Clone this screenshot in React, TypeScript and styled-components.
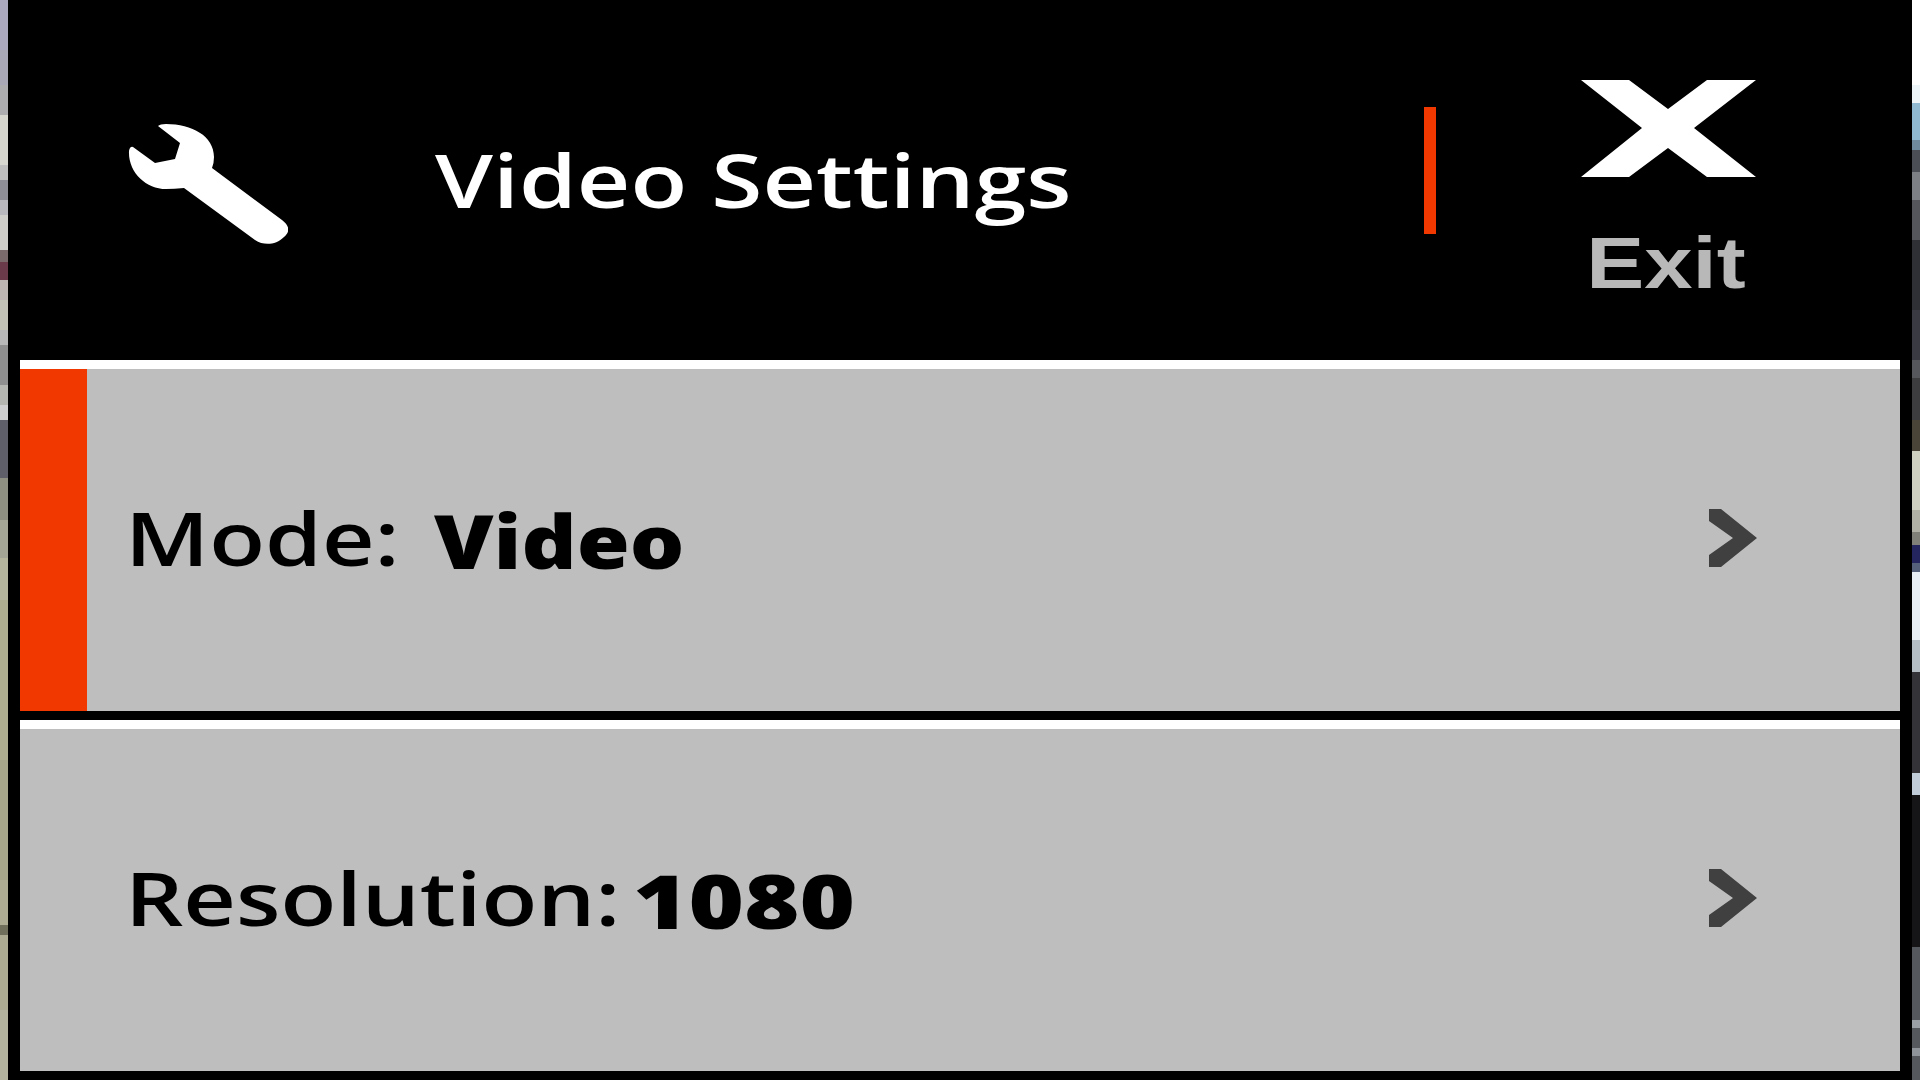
import React from "react";
import styled, { createGlobalStyle } from "styled-components";

const Global = createGlobalStyle`
  html, body { margin: 0; padding: 0; background: #000; overflow: hidden; }
`;

const Screen = styled.div`
  width: 1920px;
  height: 1080px;
  display: grid;
  grid-template-columns: 8px 1fr 8px;
  overflow: hidden;
`;

const Strip = styled.svg`
  display: block;
  width: 8px;
  height: 1080px;
`;

const Panel = styled.main`
  background: #000;
  padding: 0 12px 10px;
  display: flex;
  flex-direction: column;
  gap: 9px;
  font-family: "Open Sans", "Noto Sans", sans-serif;
`;

const Header = styled.header`
  height: 360px;
  margin-bottom: -9px;
  display: grid;
  grid-template-columns: 108px 160px 1136px 12px 145px 175px 1fr;
  color: #fff;
`;

const Wrench = styled.svg`
  grid-column: 2;
  display: block;
  width: 160px;
  height: 120px;
  margin-top: 124px;
`;

const Title = styled.h1`
  grid-column: 3;
  margin: 0;
  padding: 134px 0 0 147px;
  font-size: 74px;
  line-height: 92px;
  font-weight: 600;
  white-space: nowrap;
  filter: blur(0.5px);
  transform: scaleX(1.257);
  transform-origin: 147px 0;
`;

const Divider = styled.div`
  grid-column: 4;
  width: 12px;
  height: 127px;
  margin-top: 107px;
  background: #f03800;
`;

const ExitBox = styled.div`
  grid-column: 6;
  display: flex;
  flex-direction: column;
  align-items: center;
  padding-top: 80px;
`;

const ExitIcon = styled.svg`
  display: block;
  width: 175px;
  height: 97px;
`;

const ExitLabel = styled.span`
  font-family: "Liberation Sans", Arial, sans-serif;
  font-size: 73px;
  line-height: 84px;
  margin: 44px 6px 0 0;
  color: #b8b8b8;
  font-weight: 700;
  filter: blur(0.5px);
  transform: scaleX(1.19);
`;

const Row = styled.section<{ $height: number }>`
  height: ${(p) => p.$height}px;
  display: flex;
  align-items: stretch;
  background: #bebebe;
  border-top: 9px solid #fff;
  box-sizing: border-box;
`;

const Marker = styled.div<{ $on: boolean }>`
  width: 67px;
  flex: none;
  background: ${(p) => (p.$on ? "#f03800" : "transparent")};
`;

const RowBody = styled.div`
  flex: 1;
  display: flex;
  align-items: center;
  padding: 0 143px 0 38px;
  color: #000;
`;

const Label = styled.span<{ $width: number; $stretch: number }>`
  flex: none;
  width: ${(p) => p.$width}px;
  font-size: 74px;
  line-height: 92px;
  font-weight: 600;
  white-space: nowrap;
  margin-top: -5px;
  filter: blur(0.5px);
  transform: scaleX(${(p) => p.$stretch});
  transform-origin: 0 50%;
`;

const Value = styled(Label)`
  font-weight: 800;
  margin-top: 1px;
`;

const Chevron = styled.svg`
  display: block;
  width: 48px;
  height: 58px;
  margin-left: auto;
  margin-top: -4px;
`;

const bands = (stops: [number, string][]) =>
  stops.map(([y, c], i) => {
    const next = i + 1 < stops.length ? stops[i + 1][0] : 1080;
    return <rect key={y} x="0" y={y} width="8" height={next - y} fill={c} />;
  });

const leftStops: [number, string][] = [
  [0, "#aaa9bd"], [50, "#a9a8b6"], [85, "#adadb0"], [115, "#d6d5ce"], [165, "#bdbdbd"],
  [180, "#8f8f98"], [200, "#b9b9bd"], [215, "#cfcec8"], [250, "#7a6a6c"], [262, "#6a3a4a"],
  [280, "#bdb6b2"], [300, "#c4c3b8"], [330, "#b8b8b8"], [345, "#8f8f8f"], [385, "#b5b5b2"],
  [405, "#cfcfcf"], [420, "#5f5f6a"], [478, "#8f8f82"], [520, "#a5a595"], [558, "#b5b49c"],
  [600, "#b0ae90"], [760, "#a8a68a"], [880, "#aeac92"], [925, "#6f6f5c"], [935, "#adab92"],
  [1010, "#b4b49e"],
];

const rightStops: [number, string][] = [
  [0, "#ffffff"], [85, "#eef5f8"], [103, "#8fbad2"], [140, "#6f8a9c"], [150, "#4b4f55"],
  [172, "#7d8186"], [200, "#54565c"], [240, "#2f3036"], [310, "#3a3a42"], [360, "#55575c"],
  [378, "#3d3d40"], [420, "#4a4438"], [451, "#d0d0c0"], [510, "#b0b0a4"], [532, "#808078"],
  [545, "#24245e"], [563, "#55607a"], [572, "#e8f0f5"], [640, "#b4bcc4"], [672, "#333338"],
  [773, "#c0ccd8"], [795, "#151518"], [947, "#55585c"], [1020, "#9aa0a6"], [1028, "#55585c"],
  [1048, "#8f949a"], [1056, "#55585c"],
];

const WrenchPath = () => (
  <Wrench viewBox="128 124 160 120" aria-hidden="true">
    <path
      fill="#fff"
      d="M158 126 Q160 124 166 124 C192 124 214 136 214 157 Q214 163 212 168 L282 220 C290 226 290 232 284 237 C276 245 264 246 255 240 L184 188 Q174 189 166 189 C146 189 128 172 129 151 Q130 146 133 147 L155 163 L175 159 L180 143 Z"
    />
  </Wrench>
);

const ChevronIcon = () => (
  <Chevron viewBox="0 0 48 58" aria-hidden="true">
    <path fill="#404040" d="M0 0 H12 L48 29 L12 58 H0 V46 L24 29 L0 12 Z" />
  </Chevron>
);

export default function App() {
  return (
    <Screen>
      <Global />
      <Strip viewBox="0 0 8 1080" preserveAspectRatio="none" aria-hidden="true">
        {bands(leftStops)}
      </Strip>
      <Panel>
        <Header>
          <WrenchPath />
          <Title>Video Settings</Title>
          <Divider />
          <ExitBox>
            <ExitIcon viewBox="0 0 175 97" aria-hidden="true">
              <path
                fill="#fff"
                d="M0 0 H48 L87 29 L126 0 H175 L113 48 L175 97 H126 L87 68 L48 97 H0 L61 48 Z"
              />
            </ExitIcon>
            <ExitLabel>Exit</ExitLabel>
          </ExitBox>
        </Header>
        <Row $height={351}>
          <Marker $on />
          <RowBody>
            <Label $width={309} $stretch={1.235}>Mode:</Label>
            <Value $width={300} $stretch={1.16}>Video</Value>
            <ChevronIcon />
          </RowBody>
        </Row>
        <Row $height={351}>
          <Marker $on={false} />
          <RowBody>
            <Label $width={508} $stretch={1.235}>Resolution:</Label>
            <Value $width={230} $stretch={1.28}>1080</Value>
            <ChevronIcon />
          </RowBody>
        </Row>
      </Panel>
      <Strip viewBox="0 0 8 1080" preserveAspectRatio="none" aria-hidden="true">
        {bands(rightStops)}
      </Strip>
    </Screen>
  );
}
